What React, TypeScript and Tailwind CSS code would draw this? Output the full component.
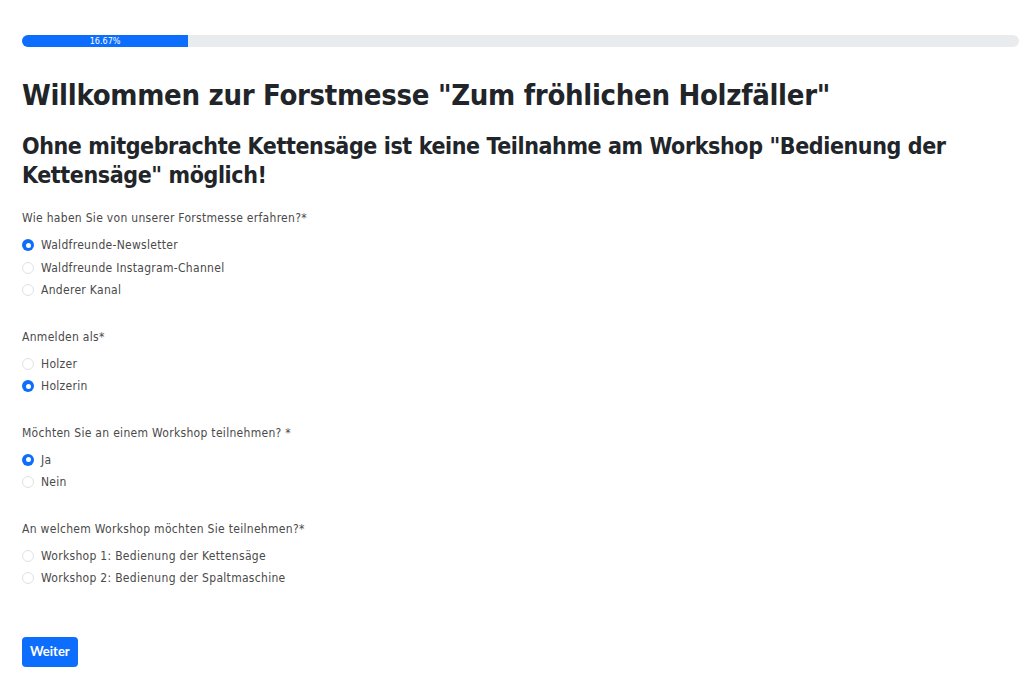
import React, { useState } from 'react';

const din = { fontFamily: '"DejaVu Sans Condensed", "Roboto", sans-serif' };

interface Question {
  id: string;
  label: string;
  options: string[];
  initial: number | null;
}

const questions: Question[] = [
  {
    id: 'source',
    label: 'Wie haben Sie von unserer Forstmesse erfahren?*',
    options: ['Waldfreunde-Newsletter', 'Waldfreunde Instagram-Channel', 'Anderer Kanal'],
    initial: 0,
  },
  {
    id: 'role',
    label: 'Anmelden als*',
    options: ['Holzer', 'Holzerin'],
    initial: 1,
  },
  {
    id: 'workshop',
    label: 'Möchten Sie an einem Workshop teilnehmen? *',
    options: ['Ja', 'Nein'],
    initial: 0,
  },
  {
    id: 'which',
    label: 'An welchem Workshop möchten Sie teilnehmen?*',
    options: ['Workshop 1: Bedienung der Kettensäge', 'Workshop 2: Bedienung der Spaltmaschine'],
    initial: null,
  },
];

function RadioGroup({ q }: { q: Question }) {
  const [value, setValue] = useState<number | null>(q.initial);
  return (
    <div className="mb-[27px]">
      <p className="text-[12px] leading-[16px] tracking-[0.3px] text-[#4a4a4a] mb-[8px]">{q.label}</p>
      {q.options.map((opt, i) => {
        const checked = value === i;
        return (
          <label key={opt} className="flex items-center h-[22.5px] cursor-pointer" onClick={() => setValue(i)}>
            <span
              className={`w-[12px] h-[12px] rounded-full shrink-0 flex items-center justify-center ${
                checked ? 'bg-[#0d6efd]' : 'border border-[#dee2e6] bg-white'
              }`}
            >
              {checked && <span className="w-[5px] h-[5px] rounded-full bg-white" />}
            </span>
            <span className="ml-[7px] text-[12px] tracking-[0.3px] text-[#4a4a4a]">{opt}</span>
          </label>
        );
      })}
    </div>
  );
}

export default function App() {
  return (
    <div className="min-h-screen bg-white px-[22px] pt-[35px] pb-[16px]" style={din}>
      <div className="h-[12px] w-[997px] rounded-[6px] bg-[#e9ecef] overflow-hidden flex">
        <div className="w-[16.67%] bg-[#0d6efd] flex items-center justify-center text-[9px] leading-none text-white">
          16.67%
        </div>
      </div>

      <h1 className="mt-[30px] text-[29px] leading-[36px] tracking-[-0.3px] font-bold text-[#212529]">
        Willkommen zur Forstmesse "Zum fröhlichen Holzfäller"
      </h1>
      <h2 className="mt-[19px] text-[23px] leading-[29px] tracking-[-0.4px] font-bold text-[#212529]">
        Ohne mitgebrachte Kettensäge ist keine Teilnahme am Workshop "Bedienung der Kettensäge" möglich!
      </h2>

      <form className="mt-[20px]">
        {questions.map((q) => (
          <RadioGroup key={q.id} q={q} />
        ))}
        <button
          type="button"
          className="mt-[20px] h-[30px] px-[8px] rounded-[4px] bg-[#0d6efd] text-white text-[13px] font-bold"
          style={{ fontFamily: 'Lato, sans-serif' }}
        >
          Weiter
        </button>
      </form>
    </div>
  );
}
